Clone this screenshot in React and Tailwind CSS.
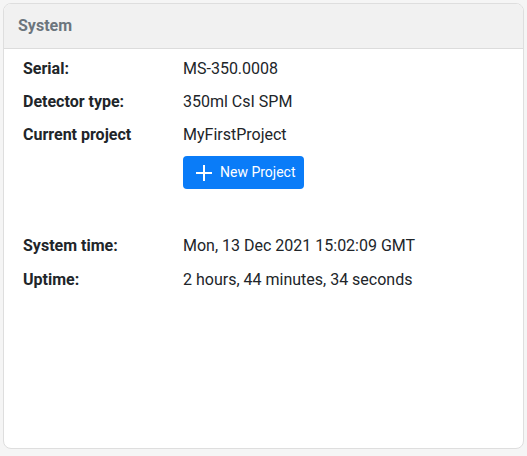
import React from "react";

const Row = ({ label, children, tall }) => (
  <div className={tall ? "flex h-[34px] items-center" : "flex h-[33px] items-center"}>
    <div className="w-[160px] font-bold text-[#212529]">{label}</div>
    <div className="text-[#212529]">{children}</div>
  </div>
);

export default function App() {
  return (
    <div
      className="h-[456px] w-[527px] bg-[#f5f5f5] p-[3px] text-[16px]"
      style={{ fontFamily: "Roboto, 'Liberation Sans', sans-serif" }}
    >
      <div className="flex h-[446px] w-[521px] flex-col overflow-hidden rounded-lg border border-[#dedede] bg-white">
        <div className="flex h-[45px] items-center border-b border-[#dcdcdc] bg-[#f1f1f1] px-[14px]">
          <span className="text-[16px] font-bold text-[#6c757d]">System</span>
        </div>

        <div className="pl-[19px] pt-[3px]">
          <Row label="Serial:">MS-350.0008</Row>
          <Row label="Detector type:">350ml CsI SPM</Row>
          <Row label="Current project">MyFirstProject</Row>

          <div className="ml-[160px] mt-[5px]">
            <button className="flex h-[33px] w-[121px] items-center gap-[7px] rounded-[4px] bg-[#0a7cf8] pl-[12px] text-[14px] text-white">
              <svg width="18" height="18" viewBox="0 0 18 18" fill="none" stroke="white" strokeWidth="2">
                <path d="M9 1v16M1 9h16" />
              </svg>
              New Project
            </button>
          </div>

          <div className="mt-[40px]">
            <Row label="System time:" tall>Mon, 13 Dec 2021 15:02:09 GMT</Row>
            <Row label="Uptime:" tall>2 hours, 44 minutes, 34 seconds</Row>
          </div>
        </div>
      </div>
    </div>
  );
}
